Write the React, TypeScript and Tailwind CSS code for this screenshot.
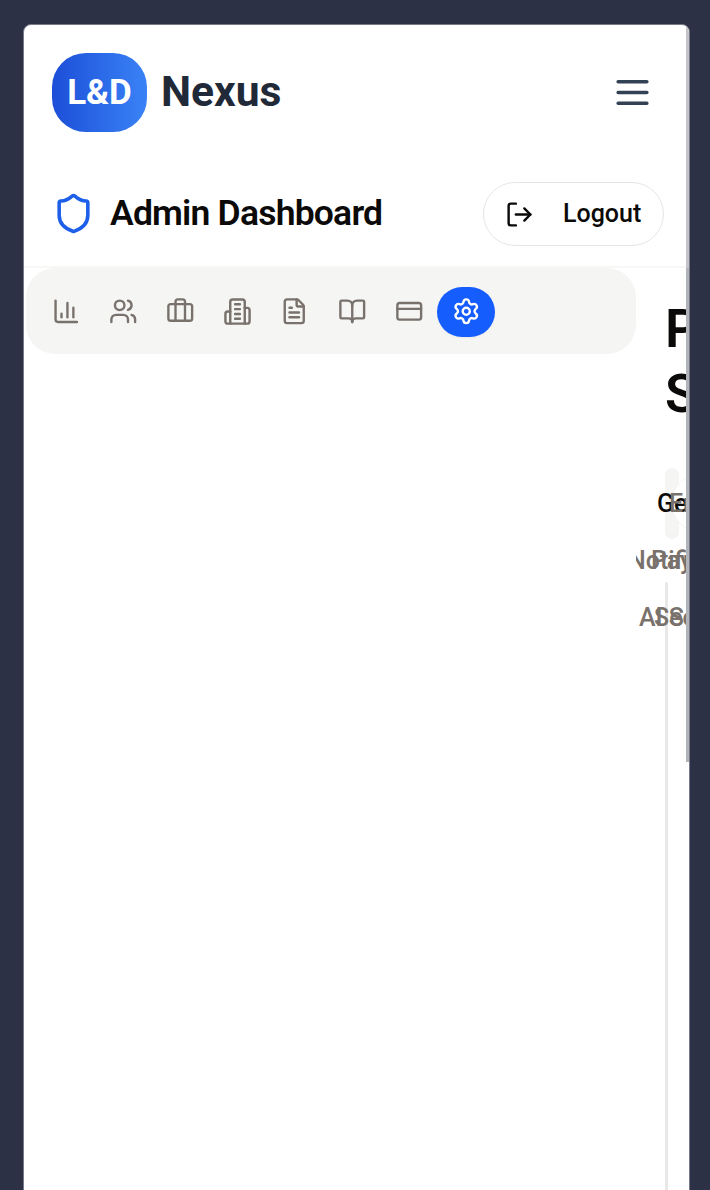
import { BookOpen, Briefcase, ChartColumn, CreditCard, FileText, LogOut, Settings, Shield, Users } from "lucide-react";

function Building() {
  return (
    <svg width="29" height="29" viewBox="0 0 24 24" fill="none" stroke="currentColor" strokeWidth="2" strokeLinecap="round" strokeLinejoin="round">
      <path d="M6 22V4a2 2 0 0 1 2-2h8a2 2 0 0 1 2 2v18Z" />
      <path d="M6 12H4a2 2 0 0 0-2 2v6a2 2 0 0 0 2 2h2" />
      <path d="M18 9h2a2 2 0 0 1 2 2v9a2 2 0 0 1-2 2h-2" />
      <path d="M10 6h4M10 10h4M10 14h4M10 18h4" />
    </svg>
  );
}

function MenuLines() {
  return (
    <svg width="43" height="43" viewBox="0 0 24 24" fill="none" stroke="#334155" strokeWidth="2" strokeLinecap="round">
      <path d="M4 6h16M4 12h16M4 18h16" />
    </svg>
  );
}

const tab = "flex h-[50px] w-[57.1px] shrink-0 items-center justify-center";

export default function App() {
  return (
    <div className="h-[1190px] w-[710px] overflow-hidden bg-[#2c3146] pt-6 pl-[23px] font-[Roboto,sans-serif]">
      <div className="relative flex h-[1180px] w-[667px] flex-col overflow-hidden rounded-t-[8px] border border-[#777b89] bg-white">
        <header className="flex h-[135px] shrink-0 items-center justify-between pr-[35px] pl-[28px]">
          <div className="flex items-center gap-[14px]">
            <div className="flex h-[79px] w-[95px] items-center justify-center rounded-[34px] bg-linear-to-r from-[#1d4ed8] to-[#3b82f6] text-[35px] font-bold text-white">
              <span className="pt-[2px]">L&amp;D</span>
            </div>
            <span className="-mt-px text-[42.6px] font-bold text-[#1f2937]">Nexus</span>
          </div>
          <MenuLines />
        </header>
        <div className="flex h-[108px] shrink-0 items-center justify-between border-b-2 border-[#f7f7f6] pr-[25px] pl-[28px]">
          <div className="flex items-center gap-[15px]">
            <Shield className="h-[43px] w-[43px] text-[#1d5fe8]" strokeWidth={2} />
            <h1 className="pt-[2px] text-[35.5px] font-semibold tracking-[-0.8px] text-[#0c0a09]">Admin Dashboard</h1>
          </div>
          <button className="mt-[2px] flex h-[64px] w-[181px] items-center rounded-full border border-[#e7e5e4] pl-[21px] text-[25px] font-medium text-[#0c0a09]">
            <LogOut className="mr-[29px] h-[29px] w-[29px]" strokeWidth={2} />
            Logout
          </button>
        </div>
        <main className="flex shrink-0">
          <nav className="ml-[2px] flex h-[86px] w-[610px] shrink-0 items-center rounded-[29px] bg-[#f5f5f4] pt-px pl-[11.8px] text-[#79716b]">
            <div className={tab}><ChartColumn size={28.5} /></div>
            <div className={tab}><Users size={28.5} /></div>
            <div className={tab}><Briefcase size={28.5} /></div>
            <div className={tab}><Building /></div>
            <div className={tab}><FileText size={28.5} /></div>
            <div className={tab}><BookOpen size={28.5} /></div>
            <div className={tab}><CreditCard size={28.5} /></div>
            <div className="flex h-[50px] w-[57.1px] shrink-0 items-center justify-center rounded-[25px] bg-[#155dfc] text-white shadow-xs"><Settings size={28.5} /></div>
          </nav>
          <section className="relative h-[930px] w-[54px] shrink-0 overflow-hidden pt-[29px] pl-[29px]">
            <h2 className="w-[300px] text-[53px] leading-[65px] font-semibold text-[#0c0a09]">Platform<br />Settings</h2>
            <div className="mt-[41px] h-[71px] w-[14px] rounded-[7px] bg-[#f5f5f4]" />
            <div className="mt-[43px] h-[700px] w-[3px] rounded-t bg-[#e9e8e7]" />
            <div className="absolute top-[206px] left-[35px] h-[58px] w-[100px] rounded-[29px] border border-[#f3f3f2] bg-white" />
            <div className="absolute inset-0 text-[25px] leading-[30px] font-medium whitespace-nowrap text-[#79716b]">
              <span className="absolute top-[221px] left-[21px] text-[#0c0a09]">General</span>
              <span className="absolute top-[221px] left-[33px]">Email</span>
              <span className="absolute top-[278px] left-[-8px]">Notifications</span>
              <span className="absolute top-[278px] left-[15px]">Payment</span>
              <span className="absolute top-[335px] left-[3px]">AI Services</span>
              <span className="absolute top-[335px] left-[18px]">Security</span>
            </div>
          </section>
        </main>
        <div className="absolute top-0 right-0 h-[737px] w-[3px] bg-linear-to-b from-[#c4c4c8] from-33% to-[#b0b4b8] to-33%" />
      </div>
    </div>
  );
}
